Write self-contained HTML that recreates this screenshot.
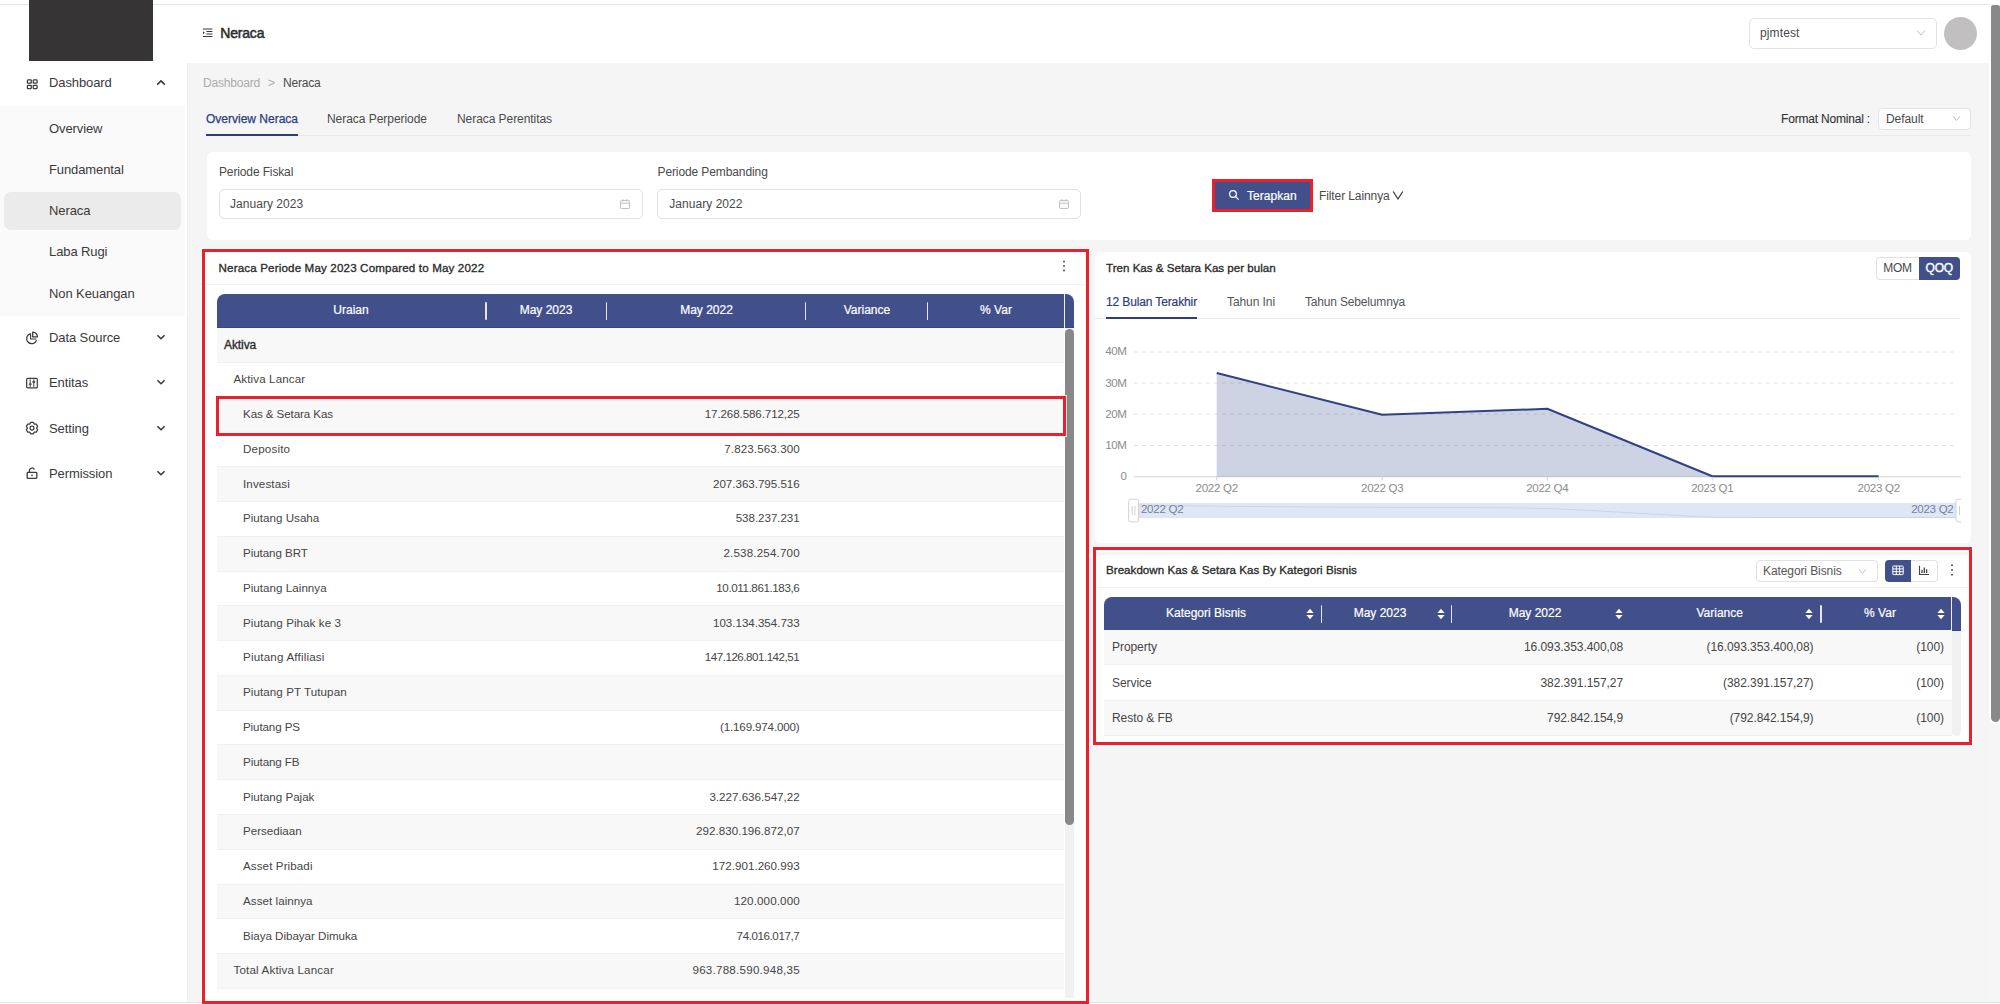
<!DOCTYPE html>
<html lang="id">
<head>
<meta charset="utf-8">
<title>Neraca</title>
<style>
*{box-sizing:border-box;margin:0;padding:0}
html,body{width:2000px;height:1004px;overflow:hidden;background:#fff}
body{position:relative;font-family:"Liberation Sans",sans-serif;font-size:12px;color:#3a3a3a;-webkit-font-smoothing:antialiased}
.abs{position:absolute}
.t{position:absolute;white-space:nowrap;line-height:16px;height:16px}
#app{position:absolute;left:0;top:5px;width:1989px;height:999px;background:#f5f5f5;overflow:hidden}
#topline{position:absolute;left:0;top:4px;width:2000px;height:1.1px;background:#e0e8e3}
#botline{position:absolute;left:0;top:1002px;width:1012px;height:1px;background:#dfe7e2}
#sidebar{position:absolute;left:0;top:0;width:187.5px;height:999px;background:#fff;border-right:1.7px solid #eeeeee}
#logo{position:absolute;left:29px;top:0;width:124px;height:61px;background:#373435}
#header{position:absolute;left:187px;top:0;width:1802px;height:58px;background:#fff}
.menu{position:absolute;left:49px;font-size:13px;color:#3a3a3a;white-space:nowrap;line-height:16px;letter-spacing:-0.1px}
.sub{position:absolute;left:49px;font-size:13px;color:#3a3a3a;white-space:nowrap;line-height:16px;letter-spacing:-0.1px}
#submenu{position:absolute;left:0;top:101px;width:185px;height:210px;background:#fafafa}
#selitem{position:absolute;left:4px;top:187px;width:177px;height:37.8px;background:#ebebeb;border-radius:7px}
.card{position:absolute;background:#fff;border-radius:6px}
.red{position:absolute;border:3.3px solid #ea212c;box-shadow:0 0 0 1px rgba(255,255,255,0.75), inset 0 0 0 1px rgba(255,255,255,0.75)}
.hdr{position:absolute;background:#41508b;border-bottom:1px solid #33468a}
.hdrt{position:absolute;color:#fff;-webkit-text-stroke:0.2px #fff;font-size:12px;line-height:16px;white-space:nowrap;text-align:center}
.vdiv{position:absolute;width:1.8px;background:#e3e6ef;border-radius:1px}
.row{position:absolute;left:0;width:100%;border-bottom:1px solid #f1f1f1}
.row.g{background:#f8f8f8}
.row span{position:absolute;white-space:nowrap;line-height:16px;font-size:11.6px;letter-spacing:-0.1px;color:#454545}
.row .v{right:0;text-align:right}
.row.r span{font-size:12px;letter-spacing:-0.06px}
.sb{font-weight:400 !important;-webkit-text-stroke:0.33px currentColor}
</style>
</head>
<body>
<div id="topline"></div>
<div id="app">
  <div id="sidebar">
    <div id="submenu"></div>
    <div id="selitem"></div>
    <!-- menu icons -->
    <svg class="abs" style="left:26px;top:72.5px" width="12.5" height="12.5" viewBox="0 0 14 14" fill="none" stroke="#3a3a3a" stroke-width="1.4"><rect x="1.6" y="2.2" width="4.3" height="3.6" rx="0.6"/><rect x="8.1" y="2.2" width="4.3" height="3.6" rx="0.6"/><rect x="1.6" y="8.2" width="4.3" height="3.6" rx="0.6"/><rect x="8.1" y="8.2" width="4.3" height="3.6" rx="0.6"/></svg>
    <div class="menu" style="top:70px">Dashboard</div>
    <svg class="abs" style="left:155px;top:72px" width="12" height="12" viewBox="0 0 12 12" fill="none" stroke="#3a3a3a" stroke-width="1.6"><path d="M2.2 7.6 L6 3.9 L9.8 7.6"/></svg>
    <div class="sub" style="top:116px">Overview</div>
    <div class="sub" style="top:157px">Fundamental</div>
    <div class="sub" style="top:198px">Neraca</div>
    <div class="sub" style="top:239px">Laba Rugi</div>
    <div class="sub" style="top:281px">Non Keuangan</div>

    <svg class="abs" style="left:25px;top:326px" width="14" height="14" viewBox="0 0 14 14" fill="none" stroke="#3a3a3a" stroke-width="1.25"><path d="M5.6 2.6 A5.1 5.1 0 1 0 11.6 9.2"/><path d="M7.7 1.2 A4.6 4.6 0 0 1 12.4 5.9 L7.7 5.9 Z" stroke-linejoin="round"/><path d="M5.6 2.6 V8 H11.4" stroke-linejoin="round" stroke-width="1.1"/></svg>
    <div class="menu" style="top:325px">Data Source</div>
    <svg class="abs" style="left:155px;top:326px" width="12" height="12" viewBox="0 0 12 12" fill="none" stroke="#3a3a3a" stroke-width="1.6"><path d="M2.4 4.2 L6 7.7 L9.6 4.2"/></svg>

    <svg class="abs" style="left:25px;top:371px" width="14" height="14" viewBox="0 0 14 14" fill="none" stroke="#3a3a3a" stroke-width="1.2"><rect x="1.7" y="2.3" width="10.6" height="9.6" rx="1"/><path d="M5.2 3.4v7.4M8.8 3.4v7.4" stroke-width="1"/><path d="M3.8 8.2h2.8M7.4 6h2.8" stroke-width="1.3"/></svg>
    <div class="menu" style="top:370px">Entitas</div>
    <svg class="abs" style="left:155px;top:371px" width="12" height="12" viewBox="0 0 12 12" fill="none" stroke="#3a3a3a" stroke-width="1.6"><path d="M2.4 4.2 L6 7.7 L9.6 4.2"/></svg>

    <svg class="abs" style="left:25px;top:416px" width="14" height="14" viewBox="0 0 14 14" fill="none" stroke="#3a3a3a" stroke-width="1.2" stroke-linejoin="round"><path d="M5.67 1.35 L8.33 1.35 L9.30 3.12 L11.31 3.08 L12.64 5.38 L11.60 7.10 L12.64 8.82 L11.31 11.12 L9.30 11.08 L8.33 12.85 L5.67 12.85 L4.70 11.08 L2.69 11.12 L1.36 8.82 L2.40 7.10 L1.36 5.38 L2.69 3.08 L4.70 3.12 Z"/><circle cx="7" cy="7.1" r="2"/></svg>
    <div class="menu" style="top:416px">Setting</div>
    <svg class="abs" style="left:155px;top:417px" width="12" height="12" viewBox="0 0 12 12" fill="none" stroke="#3a3a3a" stroke-width="1.6"><path d="M2.4 4.2 L6 7.7 L9.6 4.2"/></svg>

    <svg class="abs" style="left:25px;top:461px" width="14" height="14" viewBox="0 0 14 14" fill="none" stroke="#3a3a3a" stroke-width="1.3"><rect x="2.2" y="6.4" width="9.6" height="6" rx="0.8"/><path d="M4.4 6.4 V4.4 A2.6 2.6 0 0 1 9.4 3.6"/><path d="M7 8.6v1.6"/></svg>
    <div class="menu" style="top:461px">Permission</div>
    <svg class="abs" style="left:155px;top:462px" width="12" height="12" viewBox="0 0 12 12" fill="none" stroke="#3a3a3a" stroke-width="1.6"><path d="M2.4 4.2 L6 7.7 L9.6 4.2"/></svg>
  </div>
  
  <!-- breadcrumb -->
  <div class="t" style="left:203px;top:70px;color:#ababab;letter-spacing:-0.191px">Dashboard</div>
  <div class="t" style="left:268px;top:70px;color:#ababab">&gt;</div>
  <div class="t" style="left:283px;top:70px;color:#4a4a4a;letter-spacing:-0.181px">Neraca</div>
  <!-- tabs -->
  <div class="abs" style="left:206px;top:130px;width:1765px;height:1px;background:#e9e9e9"></div>
  <div class="t" style="left:206px;top:105.7px;color:#2c3e80;-webkit-text-stroke:0.25px #2c3e80;letter-spacing:-0.002px">Overview Neraca</div>
  <div class="abs" style="left:206px;top:129px;width:92px;height:2px;background:#2c3e80"></div>
  <div class="t" style="left:327px;top:105.7px;color:#4a4a4a;letter-spacing:-0.043px">Neraca Perperiode</div>
  <div class="t" style="left:457px;top:105.7px;color:#4a4a4a;letter-spacing:-0.062px">Neraca Perentitas</div>
  <div class="t" style="left:1781px;top:105.7px;color:#333;-webkit-text-stroke:0.1px #333;letter-spacing:-0.189px">Format Nominal :</div>
  <div class="abs" style="left:1878px;top:103px;width:93px;height:22px;border:1px solid #e3e3e3;border-radius:4px;background:#fff"></div>
  <div class="t" style="left:1886px;top:105.7px;color:#4a4a4a;letter-spacing:-0.062px">Default</div>
  <svg class="abs" style="left:1952px;top:110px" width="9" height="7" viewBox="0 0 9 7" fill="none" stroke="#bdbdbd" stroke-width="1"><path d="M1 1.2 L4.5 5.5 L8 1.2"/></svg>

  <!-- filter card -->
  <div class="card" style="left:207px;top:146.5px;width:1764px;height:88.5px"></div>
  <div class="t" style="left:219px;top:158.7px;color:#4a4a4a;letter-spacing:-0.131px">Periode Fiskal</div>
  <div class="abs" style="left:218.7px;top:184.2px;width:424px;height:30px;border:1px solid #e1e1e1;border-radius:5px;background:#fff"></div>
  <div class="t" style="left:230px;top:191.1px;color:#4a4a4a;letter-spacing:0.039px">January 2023</div>
  <svg class="abs" style="left:619px;top:193px" width="12" height="12" viewBox="0 0 12 12" fill="none" stroke="#c2c2c2" stroke-width="1"><rect x="1.5" y="2.5" width="9" height="8" rx="0.8"/><path d="M1.5 5.2h9M4 1.2v2.4M8 1.2v2.4"/></svg>
  <div class="t" style="left:657.5px;top:158.7px;color:#4a4a4a;letter-spacing:-0.104px">Periode Pembanding</div>
  <div class="abs" style="left:657px;top:184.2px;width:424.3px;height:30px;border:1px solid #e1e1e1;border-radius:5px;background:#fff"></div>
  <div class="t" style="left:669.3px;top:191.1px;color:#4a4a4a;letter-spacing:0.039px">January 2022</div>
  <svg class="abs" style="left:1058px;top:193px" width="12" height="12" viewBox="0 0 12 12" fill="none" stroke="#c2c2c2" stroke-width="1"><rect x="1.5" y="2.5" width="9" height="8" rx="0.8"/><path d="M1.5 5.2h9M4 1.2v2.4M8 1.2v2.4"/></svg>
  <div class="abs" style="left:1212px;top:174px;width:101px;height:33px;background:#41508b;border:3px solid #ea212c"></div>
  <svg class="abs" style="left:1228px;top:183.5px" width="12" height="12" viewBox="0 0 12 12" fill="none" stroke="#fff" stroke-width="1.2"><circle cx="5" cy="5" r="3.4"/><path d="M7.5 7.5 L10.6 10.6"/></svg>
  <div class="t" style="left:1247px;top:182.7px;color:#fff;-webkit-text-stroke:0.2px #fff;letter-spacing:0.041px">Terapkan</div>
  <div class="t" style="left:1319px;top:182.7px;color:#4a4a4a;letter-spacing:-0.103px">Filter Lainnya</div>
  <svg class="abs" style="left:1392px;top:184.8px" width="12" height="11" viewBox="0 0 12 11" fill="none" stroke="#333" stroke-width="1.2"><path d="M1.2 1.5 L6 9 L10.8 1.5"/></svg>
  <!-- left card -->
  <div class="card" style="left:206.3px;top:247.6px;width:879.5px;height:760px;border-radius:6px 6px 0 0"></div>
  <div class="t sb" style="left:218.6px;top:254.6px;color:#2b2b2b;font-size:11.6px;letter-spacing:0.15px">Neraca Periode May 2023 Compared to May 2022</div>
  <div class="abs" style="left:205px;top:279px;width:881px;height:1px;background:#f0f0f0"></div>
  <svg class="abs" style="left:1061px;top:254px" width="6" height="14" viewBox="0 0 6 14" fill="#555"><circle cx="3" cy="2.4" r="1"/><circle cx="3" cy="7" r="1"/><circle cx="3" cy="11.6" r="1"/></svg>
  <div class="hdr" style="left:217px;top:289px;width:857px;height:33.5px;border-radius:8px 8px 0 0"></div>
  <div class="hdrt" style="left:291px;width:120px;top:297px">Uraian</div>
  <div class="hdrt" style="left:486px;width:120px;top:297px">May 2023</div>
  <div class="hdrt" style="left:646.5px;width:120px;top:297px">May 2022</div>
  <div class="hdrt" style="left:807px;width:120px;top:297px">Variance</div>
  <div class="hdrt" style="left:936px;width:120px;top:297px">% Var</div>
  <div class="vdiv" style="left:485px;top:296.5px;height:18.5px"></div>
  <div class="vdiv" style="left:605.5px;top:296.5px;height:18.5px"></div>
  <div class="vdiv" style="left:804.5px;top:296.5px;height:18.5px"></div>
  <div class="vdiv" style="left:926.5px;top:296.5px;height:18.5px"></div>
  <div class="abs" style="left:1063.5px;top:289px;width:1px;height:33.5px;background:#f2f2f2"></div>
  <div class="row g" style="left:217px;width:847px;top:322.5px;height:35.5px"><span style="left:7px;top:9.1px;color:#2b2b2b;font-size:12px;letter-spacing:-0.081px" class="sb">Aktiva</span></div>
  <div class="row" style="left:217px;width:847px;top:358.0px;height:34.77px"><span style="left:16.5px;top:8.3px;letter-spacing:0.115px">Aktiva Lancar</span></div>
  <div class="row g" style="left:217px;width:847px;top:392.77px;height:34.77px"><span style="left:26px;top:8.3px;letter-spacing:-0.095px">Kas &amp; Setara Kas</span><span class="v" style="right:264.3px;top:8.3px;letter-spacing:-0.107px;margin-right:0.107px">17.268.586.712,25</span></div>
  <div class="row" style="left:217px;width:847px;top:427.54px;height:34.77px"><span style="left:26px;top:8.3px;letter-spacing:0.186px">Deposito</span><span class="v" style="right:264.3px;top:8.3px;letter-spacing:0.104px;margin-right:-0.104px">7.823.563.300</span></div>
  <div class="row g" style="left:217px;width:847px;top:462.31px;height:34.77px"><span style="left:26px;top:8.3px;letter-spacing:0.126px">Investasi</span><span class="v" style="right:264.3px;top:8.3px;letter-spacing:-0.025px;margin-right:0.025px">207.363.795.516</span></div>
  <div class="row" style="left:217px;width:847px;top:497.08px;height:34.77px"><span style="left:26px;top:8.3px;letter-spacing:0.018px">Piutang Usaha</span><span class="v" style="right:264.3px;top:8.3px;letter-spacing:-0.048px;margin-right:0.048px">538.237.231</span></div>
  <div class="row g" style="left:217px;width:847px;top:531.85px;height:34.77px"><span style="left:26px;top:8.3px;letter-spacing:-0.071px">Piutang BRT</span><span class="v" style="right:264.3px;top:8.3px;letter-spacing:0.179px;margin-right:-0.179px">2.538.254.700</span></div>
  <div class="row" style="left:217px;width:847px;top:566.62px;height:34.77px"><span style="left:26px;top:8.3px;letter-spacing:0.033px">Piutang Lainnya</span><span class="v" style="right:264.3px;top:8.3px;letter-spacing:-0.4px;margin-right:0.4px">10.011.861.183,6</span></div>
  <div class="row g" style="left:217px;width:847px;top:601.39px;height:34.77px"><span style="left:26px;top:8.3px;letter-spacing:0.073px">Piutang Pihak ke 3</span><span class="v" style="right:264.3px;top:8.3px;letter-spacing:-0.025px;margin-right:0.025px">103.134.354.733</span></div>
  <div class="row" style="left:217px;width:847px;top:636.16px;height:34.77px"><span style="left:26px;top:8.3px;letter-spacing:0.187px">Piutang Affiliasi</span><span class="v" style="right:264.3px;top:8.3px;letter-spacing:-0.486px;margin-right:0.486px">147.126.801.142,51</span></div>
  <div class="row g" style="left:217px;width:847px;top:670.93px;height:34.77px"><span style="left:26px;top:8.3px;letter-spacing:0.079px">Piutang PT Tutupan</span></div>
  <div class="row" style="left:217px;width:847px;top:705.7px;height:34.77px"><span style="left:26px;top:8.3px;letter-spacing:-0.112px">Piutang PS</span><span class="v" style="right:264.3px;top:8.3px;letter-spacing:-0.152px;margin-right:0.152px">(1.169.974.000)</span></div>
  <div class="row g" style="left:217px;width:847px;top:740.47px;height:34.77px"><span style="left:26px;top:8.3px;letter-spacing:-0.086px">Piutang FB</span></div>
  <div class="row" style="left:217px;width:847px;top:775.24px;height:34.77px"><span style="left:26px;top:8.3px;letter-spacing:-0.011px">Piutang Pajak</span><span class="v" style="right:264.3px;top:8.3px;letter-spacing:0.002px;margin-right:-0.002px">3.227.636.547,22</span></div>
  <div class="row g" style="left:217px;width:847px;top:810.01px;height:34.77px"><span style="left:26px;top:8.3px;letter-spacing:0.004px">Persediaan</span><span class="v" style="right:264.3px;top:8.3px;letter-spacing:0.032px;margin-right:-0.032px">292.830.196.872,07</span></div>
  <div class="row" style="left:217px;width:847px;top:844.78px;height:34.77px"><span style="left:26px;top:8.3px;letter-spacing:0.099px">Asset Pribadi</span><span class="v" style="right:264.3px;top:8.3px;letter-spacing:0.025px;margin-right:-0.025px">172.901.260.993</span></div>
  <div class="row g" style="left:217px;width:847px;top:879.55px;height:34.77px"><span style="left:26px;top:8.3px;letter-spacing:0.049px">Asset lainnya</span><span class="v" style="right:264.3px;top:8.3px;letter-spacing:0.132px;margin-right:-0.132px">120.000.000</span></div>
  <div class="row" style="left:217px;width:847px;top:914.32px;height:34.77px"><span style="left:26px;top:8.3px;letter-spacing:-0.025px">Biaya Dibayar Dimuka</span><span class="v" style="right:264.3px;top:8.3px;letter-spacing:-0.418px;margin-right:0.418px">74.016.017,7</span></div>
  <div class="row g" style="left:217px;width:847px;top:949.09px;height:34.77px"><span style="left:16.5px;top:8.3px;letter-spacing:0.163px">Total Aktiva Lancar</span><span class="v" style="right:264.3px;top:8.3px;letter-spacing:0.238px;margin-right:-0.238px">963.788.590.948,35</span></div>
  <div class="abs" style="left:1064.7px;top:322.5px;width:9.3px;height:670.5px;background:#f1f1f1"></div>
  <div class="abs" style="left:1064.7px;top:324px;width:9px;height:496.4px;background:#888;border-radius:4.5px"></div>
  <div class="red" style="left:216px;top:391px;width:850px;height:39.5px"></div>
  <div class="red" style="left:202.1px;top:244.3px;width:886.7px;height:755px;border-width:3.3px"></div>
  <!-- right top card -->
  <div class="card" style="left:1094.5px;top:247px;width:876.5px;height:290.5px"></div>
  <div class="t sb" style="left:1106px;top:254.6px;color:#2b2b2b;font-size:11.6px;letter-spacing:0px">Tren Kas &amp; Setara Kas per bulan</div>
  <div class="abs" style="left:1876px;top:252px;width:44px;height:22.5px;border:1px solid #e1e1e1;border-right:none;border-radius:4px 0 0 4px;background:#fff"></div>
  <div class="abs" style="left:1919px;top:252px;width:40.5px;height:22.5px;border-radius:0 4px 4px 0;background:#41508b"></div>
  <div class="t" style="left:1876px;width:43px;text-align:center;top:254.5px;color:#4a4a4a;letter-spacing:-0.2px">MOM</div>
  <div class="t" style="left:1919px;width:40.5px;text-align:center;top:254.5px;color:#fff;-webkit-text-stroke:0.4px #fff;letter-spacing:-0.2px">QOQ</div>
  <div class="abs" style="left:1094.5px;top:313px;width:865px;height:1px;background:#ebebeb"></div>
  <div class="t" style="left:1106px;top:288.5px;color:#2c3e80;-webkit-text-stroke:0.2px #2c3e80;letter-spacing:-0.128px">12 Bulan Terakhir</div>
  <div class="abs" style="left:1106px;top:312px;width:91px;height:2px;background:#2c3e80"></div>
  <div class="t" style="left:1227px;top:288.5px;color:#555;letter-spacing:-0.078px">Tahun Ini</div>
  <div class="t" style="left:1305px;top:288.5px;color:#555;letter-spacing:-0.172px">Tahun Sebelumnya</div>
  <svg class="abs" style="left:1095px;top:320px" width="866.2" height="215" viewBox="0 0 866.2 215" font-family="Liberation Sans, sans-serif" font-size="11.6">
    <line x1="39" y1="27" x2="863" y2="27" stroke="#e0e0e0" stroke-width="1" stroke-dasharray="3.5 4.5"/>
    <line x1="39" y1="58" x2="863" y2="58" stroke="#e0e0e0" stroke-width="1" stroke-dasharray="3.5 4.5"/>
    <line x1="39" y1="89.2" x2="863" y2="89.2" stroke="#e0e0e0" stroke-width="1" stroke-dasharray="3.5 4.5"/>
    <line x1="39" y1="120.5" x2="863" y2="120.5" stroke="#e0e0e0" stroke-width="1" stroke-dasharray="3.5 4.5"/>
    <line x1="39" y1="151.8" x2="866" y2="151.8" stroke="#d4d4d4" stroke-width="1"/>
    <text x="31.5" y="29.7" text-anchor="end" fill="#8c8c8c" letter-spacing="-0.4">40M</text>
    <text x="31.5" y="61.7" text-anchor="end" fill="#8c8c8c" letter-spacing="-0.4">30M</text>
    <text x="31.5" y="92.7" text-anchor="end" fill="#8c8c8c" letter-spacing="-0.4">20M</text>
    <text x="31.5" y="123.7" text-anchor="end" fill="#8c8c8c" letter-spacing="-0.4">10M</text>
    <text x="31.5" y="154.7" text-anchor="end" fill="#8c8c8c" letter-spacing="-0.4">0</text>
    <polygon points="121.7,48 287.2,89.8 452.3,83.8 617.3,151.3 783.7,151.3 783.7,151.8 121.7,151.8" fill="#2f4288" fill-opacity="0.235"/>
    <polyline points="121.7,48 287.2,89.8 452.3,83.8 617.3,151.3 783.7,151.3" fill="none" stroke="#2f4288" stroke-width="2" stroke-linejoin="round"/>
    <line x1="121.7" y1="151.8" x2="121.7" y2="155.5" stroke="#d4d4d4" stroke-width="1"/>
    <text x="121.7" y="167.4" text-anchor="middle" fill="#8c8c8c" letter-spacing="-0.3">2022 Q2</text>
    <line x1="287.2" y1="151.8" x2="287.2" y2="155.5" stroke="#d4d4d4" stroke-width="1"/>
    <text x="287.2" y="167.4" text-anchor="middle" fill="#8c8c8c" letter-spacing="-0.3">2022 Q3</text>
    <line x1="452.3" y1="151.8" x2="452.3" y2="155.5" stroke="#d4d4d4" stroke-width="1"/>
    <text x="452.3" y="167.4" text-anchor="middle" fill="#8c8c8c" letter-spacing="-0.3">2022 Q4</text>
    <line x1="617.3" y1="151.8" x2="617.3" y2="155.5" stroke="#d4d4d4" stroke-width="1"/>
    <text x="617.3" y="167.4" text-anchor="middle" fill="#8c8c8c" letter-spacing="-0.3">2023 Q1</text>
    <line x1="783.7" y1="151.8" x2="783.7" y2="155.5" stroke="#d4d4d4" stroke-width="1"/>
    <text x="783.7" y="167.4" text-anchor="middle" fill="#8c8c8c" letter-spacing="-0.3">2023 Q2</text>
    <rect x="39" y="178" width="824" height="15" fill="#dfe7f6"/>
    <path d="M39 180 C 205 183, 405 182, 452 183.5 S 595 192, 625 192.3 L 863 192.5" fill="none" stroke="#c9cfdb" stroke-width="0.8"/>
    <rect x="33.6" y="174.3" width="10" height="22.6" rx="2" fill="#fff" stroke="#d2d2d2" stroke-width="1"/>
    <path d="M37.1 181v9M39.9 181v9" stroke="#c4c4c4" stroke-width="0.8"/>
    <rect x="861.0" y="174.3" width="10" height="22.6" rx="2" fill="#fff" stroke="#d2d2d2" stroke-width="1"/>
    <path d="M864.5 181v9M867 181v9" stroke="#c4c4c4" stroke-width="0.8"/>
    <text x="46" y="188.5" fill="#7580a0" letter-spacing="-0.3">2022 Q2</text>
    <text x="858.5" y="188.5" text-anchor="end" fill="#7580a0" letter-spacing="-0.3">2023 Q2</text>
  </svg>
  <!-- right bottom card -->
  <div class="abs" style="left:1095px;top:545px;width:875px;height:1.6px;background:#fff"></div>
  <div class="card" style="left:1094.6px;top:550.2px;width:876.4px;height:192px;border-radius:6px 6px 0 0"></div>
  <div class="t sb" style="left:1106px;top:557.2px;color:#2b2b2b;font-size:11.6px;letter-spacing:0.02px">Breakdown Kas &amp; Setara Kas By Kategori Bisnis</div>
  <div class="abs" style="left:1095px;top:581.5px;width:875px;height:1px;background:#f0f0f0"></div>
  <div class="abs" style="left:1756px;top:555px;width:121.5px;height:21.5px;border:1px solid #e1e1e1;border-radius:4px;background:#fff"></div>
  <div class="t" style="left:1763px;top:557.5px;color:#555;letter-spacing:-0.096px">Kategori Bisnis</div>
  <svg class="abs" style="left:1858px;top:562.5px" width="9" height="7" viewBox="0 0 9 7" fill="none" stroke="#c4c4c4" stroke-width="1"><path d="M1 1.2 L4.5 5.5 L8 1.2"/></svg>
  <div class="abs" style="left:1885px;top:555px;width:26.5px;height:21.5px;border-radius:4px 0 0 4px;background:#41508b"></div>
  <div class="abs" style="left:1911px;top:555px;width:26.5px;height:21.5px;border:1px solid #e1e1e1;border-left:none;border-radius:0 4px 4px 0;background:#fff"></div>
  <svg class="abs" style="left:1892px;top:560px" width="12" height="11" viewBox="0 0 12 11" fill="none" stroke="#fff" stroke-width="1"><rect x="0.8" y="1" width="10.4" height="8.6" rx="0.6"/><path d="M0.8 3.9h10.4M0.8 6.7h10.4M4.3 1v8.6M7.7 1v8.6"/></svg>
  <svg class="abs" style="left:1918px;top:560px" width="12" height="11" viewBox="0 0 12 11" fill="none" stroke="#444" stroke-width="1.1"><path d="M1.5 0.8v8.7h9.5"/><path d="M4 8V5M6.3 8V2.6M8.6 8V4.2" stroke-width="1.3"/></svg>
  <svg class="abs" style="left:1949px;top:557.5px" width="6" height="14" viewBox="0 0 6 14" fill="#555"><circle cx="3" cy="2.2" r="1"/><circle cx="3" cy="7" r="1"/><circle cx="3" cy="11.8" r="1"/></svg>
  <div class="hdr" style="left:1104px;top:591.5px;width:857px;height:34px;border-radius:8px 8px 0 0"></div>
  <div class="hdrt" style="left:1146px;width:120px;top:600px">Kategori Bisnis</div>
  <div class="hdrt" style="left:1320px;width:120px;top:600px">May 2023</div>
  <div class="hdrt" style="left:1475px;width:120px;top:600px">May 2022</div>
  <div class="hdrt" style="left:1659.7px;width:120px;top:600px">Variance</div>
  <div class="hdrt" style="left:1820px;width:120px;top:600px">% Var</div>
  <div class="vdiv" style="left:1320.5px;top:600px;height:17.5px"></div>
  <div class="vdiv" style="left:1450.5px;top:600px;height:17.5px"></div>
  <div class="vdiv" style="left:1820.3px;top:600px;height:17.5px"></div>
  <div class="abs" style="left:1951px;top:591.5px;width:1px;height:34px;background:#f2f2f2"></div>
  <svg class="abs" style="left:1306.0px;top:602.8px" width="8" height="12" viewBox="0 0 8 12" fill="#fff"><path d="M4 0.7 L7.6 5 H0.4 Z"/><path d="M4 11.3 L7.6 7 H0.4 Z"/></svg>
  <svg class="abs" style="left:1436.7px;top:602.8px" width="8" height="12" viewBox="0 0 8 12" fill="#fff"><path d="M4 0.7 L7.6 5 H0.4 Z"/><path d="M4 11.3 L7.6 7 H0.4 Z"/></svg>
  <svg class="abs" style="left:1614.7px;top:602.8px" width="8" height="12" viewBox="0 0 8 12" fill="#fff"><path d="M4 0.7 L7.6 5 H0.4 Z"/><path d="M4 11.3 L7.6 7 H0.4 Z"/></svg>
  <svg class="abs" style="left:1805.2px;top:602.8px" width="8" height="12" viewBox="0 0 8 12" fill="#fff"><path d="M4 0.7 L7.6 5 H0.4 Z"/><path d="M4 11.3 L7.6 7 H0.4 Z"/></svg>
  <svg class="abs" style="left:1936.7px;top:602.8px" width="8" height="12" viewBox="0 0 8 12" fill="#fff"><path d="M4 0.7 L7.6 5 H0.4 Z"/><path d="M4 11.3 L7.6 7 H0.4 Z"/></svg>
  <div class="row r g" style="left:1104px;width:848px;top:625.3px;height:35.15px"><span style="left:8px;top:9.2px">Property</span><span class="v" style="right:329px;top:9.2px">16.093.353.400,08</span><span class="v" style="right:138.5px;top:9.2px">(16.093.353.400,08)</span><span class="v" style="right:8px;top:9.2px">(100)</span></div>
  <div class="row r" style="left:1104px;width:848px;top:660.45px;height:35.15px"><span style="left:8px;top:9.2px">Service</span><span class="v" style="right:329px;top:9.2px">382.391.157,27</span><span class="v" style="right:138.5px;top:9.2px">(382.391.157,27)</span><span class="v" style="right:8px;top:9.2px">(100)</span></div>
  <div class="row r g" style="left:1104px;width:848px;top:695.6px;height:35.15px"><span style="left:8px;top:9.2px">Resto &amp; FB</span><span class="v" style="right:329px;top:9.2px">792.842.154,9</span><span class="v" style="right:138.5px;top:9.2px">(792.842.154,9)</span><span class="v" style="right:8px;top:9.2px">(100)</span></div>
  <div class="abs" style="left:1952px;top:626px;width:9px;height:105px;background:#f0f0f0;border-radius:0 0 4.5px 4.5px"></div>
  <div class="red" style="left:1092.5px;top:542.3px;width:879.5px;height:198px"></div>
  <div id="header">
    <svg class="abs" style="left:15.3px;top:22.3px" width="11.4" height="11.4" viewBox="0 0 12 12" fill="none" stroke="#3a3a3a" stroke-width="1.1"><path d="M1 2h10M4.6 4.7h6.4M4.6 7.3h6.4M1 10h10"/><path d="M1 4.4 L3 6 L1 7.6 Z" fill="#3a3a3a" stroke="none"/></svg>
    <div class="t" style="left:33.3px;top:20.4px;font-size:14px;color:#2b2b2b;letter-spacing:-0.2px;-webkit-text-stroke:0.5px #2b2b2b">Neraca</div>
    <div class="abs" style="left:1562px;top:13px;width:188px;height:31px;border:1px solid #e3e3e3;border-radius:5px;background:#fff"></div>
    <div class="t" style="left:1573px;top:20.1px;font-size:12px;color:#4a4a4a;letter-spacing:0.13px">pjmtest</div>
    <svg class="abs" style="left:1729px;top:24px" width="10" height="8" viewBox="0 0 10 8" fill="none" stroke="#bdbdbd" stroke-width="1"><path d="M1 1.5 L5 6 L9 1.5"/></svg>
    <div class="abs" style="left:1757px;top:12px;width:33px;height:33px;border-radius:50%;background:#c1bfbf"></div>
  </div>
</div>
<div class="abs" style="left:0;top:1002px;width:202px;height:2px;background:#fff;border-top:1px solid #dfe7e2"></div>
<div class="abs" style="left:1088.5px;top:1002px;width:912px;height:2px;background:#fff;border-top:1px solid #dfe7e2"></div>
<div id="logo"></div>
<div class="abs" style="left:1989px;top:5px;width:11px;height:997px;background:#f6f6f6"></div>
<div class="abs" style="left:1990.8px;top:5px;width:9.4px;height:717.4px;background:#898989;border-radius:2.5px 2.5px 4.7px 4.7px;box-shadow:0 0 0 1.6px #fff"></div>
</body>
</html>
